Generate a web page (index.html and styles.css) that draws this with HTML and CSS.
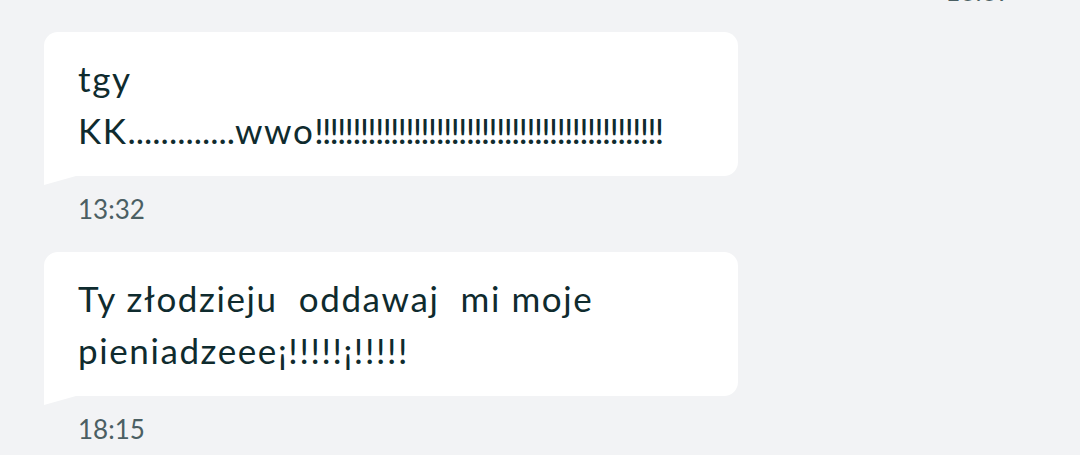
FILE: index.html
```html
<html>
    <head>
        <link rel="stylesheet" href="styles.css">
    </head>
    <body>
        <div class="chat">
            <div class="time time-out">13:37</div>

            <div class="message">
                <div class="bubble">tgy
KK<span class="dots">.............</span>wwo<span class="bangs">!!!!!!!!!!!!!!!!!!!!!!!!!!!!!!!!!!!!!!!!!!!!!!</span></div>
                <div class="time">13:32</div>
            </div>

            <div class="message">
                <div class="bubble">Ty złodzieju  oddawaj  mi moje pieniadzeee¡!!!!!¡!!!!!</div>
                <div class="time">18:15</div>
            </div>
        </div>
    </body>
</html>
```

FILE: styles.css
```css
body {
    margin: 0;
    background-color: #f2f3f5;
    font-family: "Lato", "Noto Sans", sans-serif;
    color: #0f2b2e;
    overflow: hidden;
}

.chat {
    display: flex;
    flex-direction: column;
    padding: 0 0 0 44px;
}

.time {
    font-size: 26px;
    line-height: 34px;
    color: #4b5f63;
    padding-left: 34px;
    margin-top: 16px;
}

.time-out {
    margin-top: -26px;
    padding-right: 68px;
    text-align: right;
    margin-bottom: 24px;
}

.message {
    display: flex;
    flex-direction: column;
    margin-bottom: 26px;
}

.bubble {
    position: relative;
    width: 626px;
    padding: 20px 34px 20px 34px;

    font-size: 35px;
    line-height: 52px;
    letter-spacing: 1.6px;
    white-space: pre-wrap;

    background-color: white;
    border-radius: 14px 14px 14px 0;
}

.dots {
    letter-spacing: 0;
}

.bangs {
    letter-spacing: -1.85px;
}

/* little tail under the bottom-left corner */
.bubble::after {
    content: "";
    position: absolute;
    left: 0;
    bottom: -9px;
    width: 32px;
    height: 9px;
    background-color: white;
    clip-path: polygon(0 0, 100% 0, 0 100%);
}
```
